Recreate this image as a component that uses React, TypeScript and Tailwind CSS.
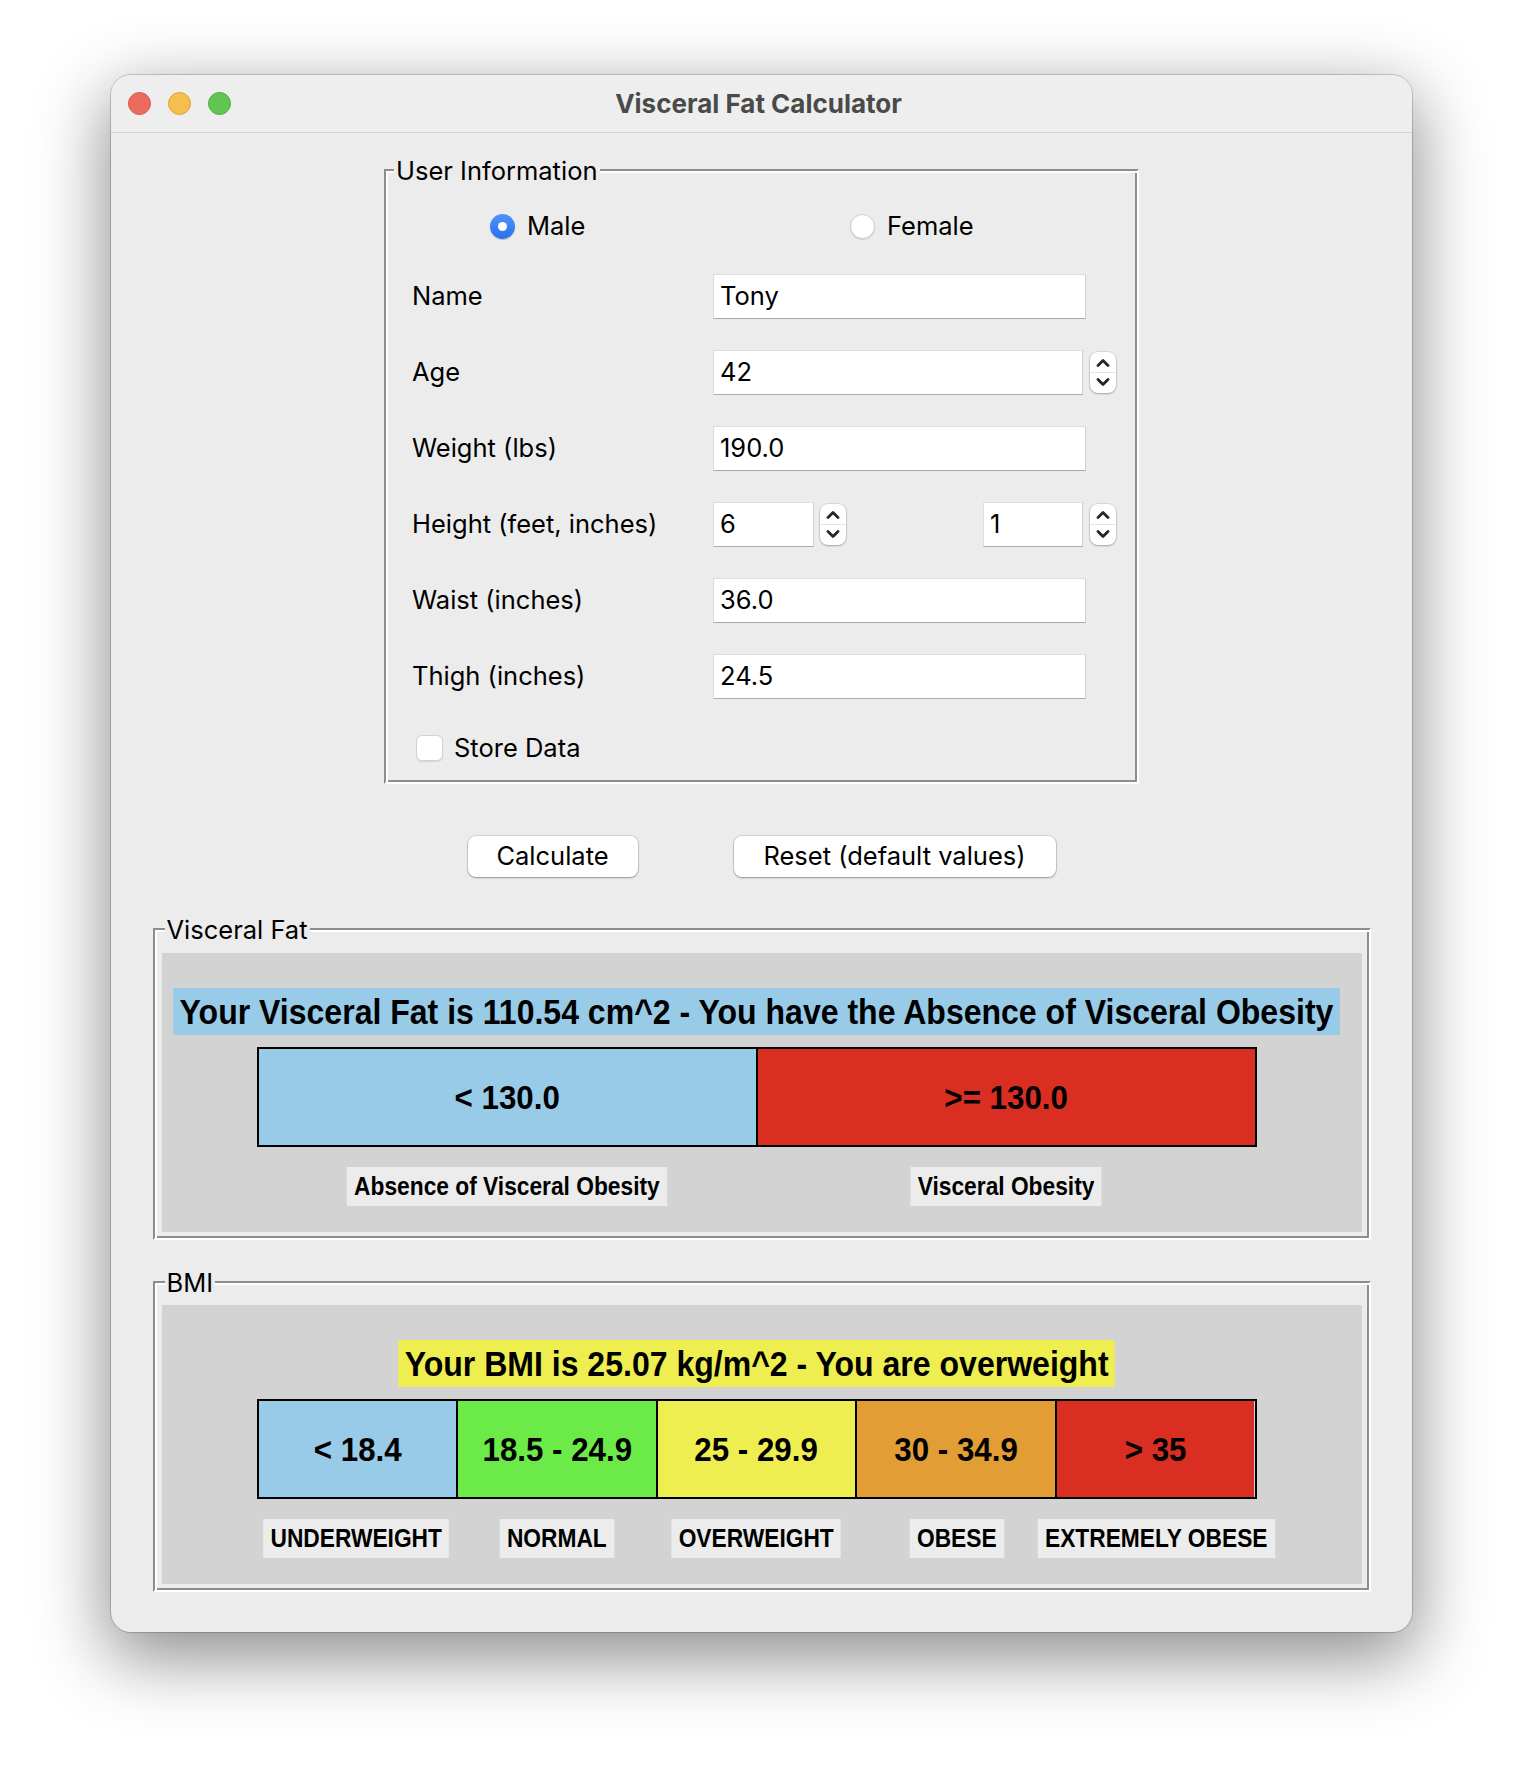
import React from "react";

const GRAPHIC = "font-['Liberation_Sans',Arial,sans-serif] font-bold text-black";

function GroupBox({
  title,
  className,
  legendClass,
  children,
}: {
  title: string;
  className: string;
  legendClass: string;
  children: React.ReactNode;
}) {
  return (
    <div
      className={`flex flex-col border-2 border-t-[#8d8d8d] border-l-[#8d8d8d] border-r-white border-b-white shadow-[inset_2px_2px_0_#ffffff,inset_-2px_-2px_0_#8d8d8d] ${className}`}
    >
      <span className={`-mt-[17px] w-fit bg-[#ececec] px-[2px] text-[25.5px] leading-[34px] text-black ${legendClass}`}>
        {title}
      </span>
      {children}
    </div>
  );
}

function Chevron({ up }: { up: boolean }) {
  return (
    <svg width="14" height="9" viewBox="0 0 14 9" className="block">
      <path
        d={up ? "M2 7.5 L7 2.5 L12 7.5" : "M2 1.5 L7 6.5 L12 1.5"}
        fill="none"
        stroke="#262626"
        strokeWidth="2.8"
        strokeLinecap="round"
        strokeLinejoin="round"
      />
    </svg>
  );
}

function Spinner() {
  return (
    <div className="flex h-[41px] w-[26px] flex-col overflow-hidden rounded-[8px] bg-white shadow-[0_0_0_1px_rgba(0,0,0,0.08),0_1px_2px_rgba(0,0,0,0.25)]">
      <div className="flex flex-1 items-center justify-center border-b border-[#e4e4e4] pt-[1px]">
        <Chevron up />
      </div>
      <div className="flex flex-1 items-center justify-center pb-[1px]">
        <Chevron up={false} />
      </div>
    </div>
  );
}

function Field({ value, w }: { value: string; w: string }) {
  return (
    <div
      className={`flex h-[45px] items-center border border-t-[#dedede] border-l-[#dedede] border-r-[#d0d0d0] border-b-[#a9a9a9] bg-white pl-[6px] text-[25.5px] text-black ${w}`}
    >
      {value}
    </div>
  );
}

function Row({ label, children }: { label: string; children: React.ReactNode }) {
  return (
    <div className="flex h-[76px] items-center pl-[26px]">
      <span className="w-[301px] text-[25.5px] text-black">{label}</span>
      {children}
    </div>
  );
}

function Bar({
  segs,
  labels,
}: {
  segs: { text: string; bg: string }[];
  labels: string[];
}) {
  return (
    <>
      <div className="mt-[12px] flex h-[100px] w-[1000px] border-2 border-black">
        {segs.map((s, i) => (
          <div
            key={i}
            className={`flex min-w-0 flex-1 items-center justify-center ${i > 0 ? "border-l-2 border-black" : ""} ${s.bg}`}
          >
            <span className={`${GRAPHIC} shrink-0 scale-x-[0.92] whitespace-nowrap text-[34px] leading-none`}>
              {s.text}
            </span>
          </div>
        ))}
      </div>
      <div className="mt-[20px] flex w-[1000px]">
        {labels.map((l, i) => (
          <div key={i} className="flex min-w-0 flex-1 justify-center">
            <span
              className={`${GRAPHIC} flex h-[39px] shrink-0 scale-x-[0.91] items-center whitespace-nowrap bg-[#ececec] px-[8px] text-[25px] leading-none`}
            >
              {l}
            </span>
          </div>
        ))}
      </div>
    </>
  );
}

export default function App() {
  return (
    <div className="h-[1780px] w-[1524px] bg-white pt-[75px] pl-[111px] font-['Inter','Noto_Sans',sans-serif]">
      <div className="flex h-[1557px] w-[1301px] flex-col overflow-hidden rounded-[20px] bg-[#ececec] shadow-[0_0_0_1px_rgba(0,0,0,0.18),0_22px_70px_4px_rgba(0,0,0,0.45)]">
        {/* Title bar */}
        <div className="flex h-[58px] shrink-0 items-center border-b border-[#d3d3d3] bg-[#eeeeee] pl-[17px]">
          <div className="flex gap-[17px]">
            <span className="h-[23px] w-[23px] rounded-full border border-[#d35a4f] bg-[#ed6a5e]" />
            <span className="h-[23px] w-[23px] rounded-full border border-[#d9a23b] bg-[#f5bf4f]" />
            <span className="h-[23px] w-[23px] rounded-full border border-[#4fa843] bg-[#61c554]" />
          </div>
          <div className="flex-1 pr-[126px] text-center text-[26px] font-bold text-[#4a4a4a]">
            Visceral Fat Calculator
          </div>
        </div>

        {/* Body */}
        <div className="flex flex-col items-center pt-[36px]">
          <GroupBox title="User Information" className="w-[755px]" legendClass="ml-[8px]">
            <div className="pt-[6px]">
              <div className="flex h-[64px] items-center pl-[104px]">
                <div className="flex w-[360px] items-center gap-[12px]">
                  <span className="flex h-[25px] w-[25px] items-center justify-center rounded-full bg-gradient-to-b from-[#4f92f8] to-[#2a6ff0] shadow-[0_1px_1px_rgba(0,0,0,0.2)]">
                    <span className="h-[9px] w-[9px] rounded-full bg-white" />
                  </span>
                  <span className="text-[25.5px] text-black">Male</span>
                </div>
                <div className="flex items-center gap-[12px]">
                  <span className="h-[25px] w-[25px] rounded-full border border-[#cfcfcf] bg-white shadow-[0_1px_1px_rgba(0,0,0,0.12)]" />
                  <span className="text-[25.5px] text-black">Female</span>
                </div>
              </div>
              <Row label="Name">
                <Field value="Tony" w="w-[373px]" />
              </Row>
              <Row label="Age">
                <Field value="42" w="w-[370px]" />
                <div className="ml-[7px]">
                  <Spinner />
                </div>
              </Row>
              <Row label="Weight (lbs)">
                <Field value="190.0" w="w-[373px]" />
              </Row>
              <Row label="Height (feet, inches)">
                <Field value="6" w="w-[101px]" />
                <div className="ml-[6px]">
                  <Spinner />
                </div>
                <div className="ml-[137px]">
                  <Field value="1" w="w-[100px]" />
                </div>
                <div className="ml-[7px]">
                  <Spinner />
                </div>
              </Row>
              <Row label="Waist (inches)">
                <Field value="36.0" w="w-[373px]" />
              </Row>
              <Row label="Thigh (inches)">
                <Field value="24.5" w="w-[373px]" />
              </Row>
              <div className="flex h-[68px] items-center gap-[11px] pl-[30px]">
                <span className="h-[26px] w-[27px] rounded-[6px] border border-[#d2d2d2] bg-white shadow-[0_1px_1px_rgba(0,0,0,0.1)]" />
                <span className="text-[25.5px] text-black">Store Data</span>
              </div>
            </div>
          </GroupBox>

          {/* Buttons */}
          <div className="mt-[52px] flex gap-[96px]">
            <div className="flex h-[41px] w-[170px] items-center justify-center rounded-[8px] bg-white text-[25.5px] text-black shadow-[0_0_0_1px_rgba(0,0,0,0.1),0_1px_2px_rgba(0,0,0,0.3)]">
              Calculate
            </div>
            <div className="flex h-[41px] w-[322px] items-center justify-center rounded-[8px] bg-white text-[25.5px] text-black shadow-[0_0_0_1px_rgba(0,0,0,0.1),0_1px_2px_rgba(0,0,0,0.3)]">
              Reset (default values)
            </div>
          </div>

          {/* Visceral Fat */}
          <GroupBox title="Visceral Fat" className="mt-[51px] w-[1218px]" legendClass="ml-[10px]">
            <div className="mx-[7px] mt-[6px] mb-[6px] flex flex-col items-center bg-[#d3d3d3] pt-[35px] pr-[10px] pb-[26px]">
              <div className={`${GRAPHIC} flex h-[47px] shrink-0 scale-x-[0.915] items-center whitespace-nowrap bg-[#97cbe7] px-[7px] text-[35px] leading-none`}>
                Your Visceral Fat is 110.54 cm^2 - You have the Absence of Visceral Obesity
              </div>
              <Bar
                segs={[
                  { text: "< 130.0", bg: "bg-[#97cbe7]" },
                  { text: ">= 130.0", bg: "bg-[#da2e22]" },
                ]}
                labels={["Absence of Visceral Obesity", "Visceral Obesity"]}
              />
            </div>
          </GroupBox>

          {/* BMI */}
          <GroupBox title="BMI" className="mt-[41px] w-[1218px]" legendClass="ml-[10px]">
            <div className="mx-[7px] mt-[5px] mb-[6px] flex flex-col items-center bg-[#d3d3d3] pt-[35px] pr-[10px] pb-[26px]">
              <div className={`${GRAPHIC} flex h-[47px] shrink-0 scale-x-[0.915] items-center whitespace-nowrap bg-[#efee50] px-[7px] text-[35px] leading-none`}>
                Your BMI is 25.07 kg/m^2 - You are overweight
              </div>
              <Bar
                segs={[
                  { text: "< 18.4", bg: "bg-[#97cbe7]" },
                  { text: "18.5 - 24.9", bg: "bg-[#6ceb48]" },
                  { text: "25 - 29.9", bg: "bg-[#efee50]" },
                  { text: "30 - 34.9", bg: "bg-[#e29d35]" },
                  { text: "> 35", bg: "bg-[#da2e22]" },
                ]}
                labels={["UNDERWEIGHT", "NORMAL", "OVERWEIGHT", "OBESE", "EXTREMELY OBESE"]}
              />
            </div>
          </GroupBox>
        </div>
      </div>
    </div>
  );
}
